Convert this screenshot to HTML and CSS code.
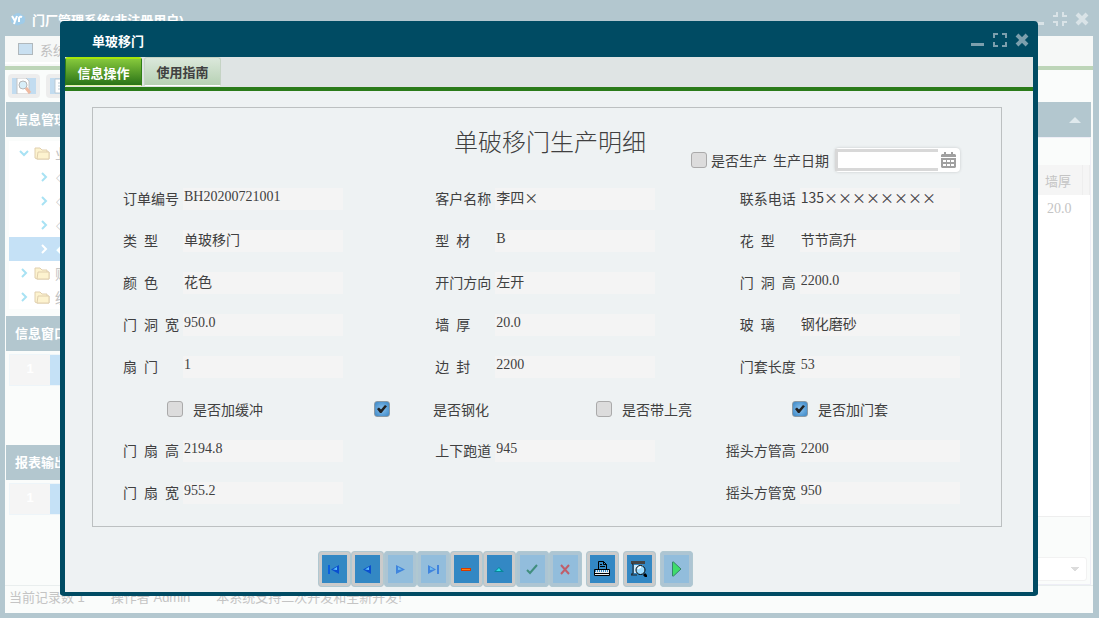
FILE: index.html
```html
<!DOCTYPE html>
<html lang="zh-CN">
<head>
    <meta charset="UTF-8">
    <meta name="viewport" content="width=device-width, initial-scale=1.0">
    <title>门厂管理系统</title>
    <link rel="stylesheet" href="styles.css">
</head>
<body>

    <div class="app">
        <header class="app-title">
            <svg class="logo" width="16" height="16" viewBox="0 0 16 16"><path d="M1 8a4 4 0 0 1 3-4 5 5 0 0 1 8 0 4 4 0 0 1 3 5 4 4 0 0 1-4 4 5 5 0 0 1-7 0A4 4 0 0 1 1 8z" fill="#9fcbe8"/><path d="M2 5l3 5 2-5M5 10l-1 3M9 11V7q1-2 3-1" stroke="#fff" stroke-width="2" fill="none"/></svg>
            <span>门厂管理系统(非注册用户)</span>
            <div class="win-btns">
                <button title="最小化"><svg width="16" height="16"><path d="M1 11h13v3H1z" fill="currentColor"/></svg></button>
                <button title="还原"><svg width="16" height="16"><path d="M1 5h4V1M11 1v4h4M1 11h4v4M11 15v-4h4" stroke="currentColor" stroke-width="2" fill="none"/></svg></button>
                <button title="关闭"><svg width="16" height="16"><path d="M3 3l10 10M13 3L3 13" stroke="currentColor" stroke-width="4"/></svg></button>
            </div>
        </header>
        <div class="app-body">
            <nav class="menu">
                <a href="#"><svg width="15" height="12"><rect x=".5" y=".5" width="14" height="11" fill="#c9e0f1" stroke="#b0b8bc"/></svg>系统</a>
            </nav>
            <div class="tools">
                <button title="查询"><svg width="24" height="16"><path fill="#c2dcf0" d="M0 0h24v16H0z"/><path d="M5 0h9l3 3v13H5z" fill="#fff" stroke="#c5c5c5"/><circle cx="11" cy="7" r="4" fill="#d8eef8" stroke="#b5b5b5"/><path d="M14 10l4 5" stroke="#f0b9a0" stroke-width="3"/></svg></button>
                <button title="列表"><svg width="24" height="16"><path fill="#c2dcf0" d="M0 0h24v16H0z"/><path d="M5 1h13v14H5zM8 5h7M8 8h7M8 11h7" fill="#fff" stroke="#bccbd5"/></svg></button>
            </div>
            <div class="work">
                <aside class="side">
                    <h2>信息管理</h2>
                    <ul class="tree">
                        <li><svg class="arrow" width="10" height="10"><path d="M1 3l4 4 4-4"/></svg><svg class="folder" width="16" height="14"><path d="M1 12V2h5l2 2h5v2h2v7H3z"/><path d="M4 6h11v7H3z"/></svg>业</li>
                        <li class="sub"><svg class="arrow" width="10" height="10"><path d="M3 1l4 4-4 4"/></svg>◇</li>
                        <li class="sub"><svg class="arrow" width="10" height="10"><path d="M3 1l4 4-4 4"/></svg>◇</li>
                        <li class="sub"><svg class="arrow" width="10" height="10"><path d="M3 1l4 4-4 4"/></svg>◇</li>
                        <li class="sub selected"><svg class="arrow" width="10" height="10"><path d="M3 1l4 4-4 4"/></svg>◆</li>
                        <li><svg class="arrow" width="10" height="10"><path d="M3 1l4 4-4 4"/></svg><svg class="folder" width="16" height="14"><path d="M1 12V2h5l2 2h5v2h2v7H3z"/><path d="M4 6h11v7H3z"/></svg>财</li>
                        <li><svg class="arrow" width="10" height="10"><path d="M3 1l4 4-4 4"/></svg><svg class="folder" width="16" height="14"><path d="M1 12V2h5l2 2h5v2h2v7H3z"/><path d="M4 6h11v7H3z"/></svg>统</li>
                    </ul>
                    <h2>信息窗口</h2>
                    <div class="list"><div class="list-row"><b>1</b><span></span></div></div>
                    <h2>报表输出</h2>
                    <div class="list"><div class="list-row"><b>1</b><span></span></div></div>
                </aside>
                <section class="main">
                    <h2><svg width="12" height="6"><path d="M0 6l6-6 6 6z" fill="#dfe9ed"/></svg></h2>
                    <div class="main-body">
                        <div class="grid">
                            <table>
                                <thead><tr><th>墙厚</th><th class="end"></th></tr></thead>
                                <tbody><tr><td>20.0</td><td class="end"></td></tr></tbody>
                            </table>
                        </div>
                        <div class="pager"><select aria-label="每页记录"><option></option></select></div>
                    </div>
                </section>
            </div>
            <footer class="status"><span>当前记录数 1</span><span>操作者 Admin</span><span>本系统支持二次开发和全新开发!</span></footer>
        </div>
    </div>

    <div class="dialog" role="dialog" aria-labelledby="dlgTitle">
        <header class="dialog-title">
            <span id="dlgTitle">单玻移门</span>
            <div class="win-btns">
                <button title="最小化"><svg width="16" height="16"><path d="M1 11h13v3H1z" fill="currentColor"/></svg></button>
                <button title="最大化"><svg width="16" height="16"><path d="M2 6V2h4M10 2h4v4M2 10v4h4M10 14h4v-4" stroke="currentColor" stroke-width="2" fill="none"/></svg></button>
                <button title="关闭"><svg width="16" height="16"><path d="M3 3l10 10M13 3L3 13" stroke="currentColor" stroke-width="4"/></svg></button>
            </div>
        </header>
        <nav class="tabs">
            <button class="active">信息操作</button>
            <button>使用指南</button>
        </nav>
        <form class="sheet">
            <div class="sheet-head">
                <h1>单破移门生产明细</h1>
                <label class="produce"><input type="checkbox">是否生产</label>
                <div class="date">
                    <label for="date">生产日期</label>
                    <div class="date-box">
                        <input type="text" id="date">
                        <button type="button" title="选择日期"><svg width="15" height="16"><path d="M3 0h2v2h5V0h2v2h2l1 1v2H0V3l1-1h2z" fill="#a0a0a0"/><path d="M0 6h15v9l-1 1H1l-1-1z" fill="#a0a0a0"/><path d="M2 8h3v2H2zM6 8h3v2H6zM10 8h3v2h-3zM2 12h3v2H2zM6 12h3v2H6zM10 12h3v2h-3z" fill="#fff"/></svg></button>
                    </div>
                </div>
            </div>
            <div class="fields">
                <div class="field"><label for="f1">订单编号</label><input type="text" id="f1" value="BH20200721001"></div>
                <div class="field"><label for="f2">客户名称</label><input type="text" id="f2" class="cjk" value="李四×"></div>
                <div class="field"><label for="f3" class="indent">联系电话</label><input type="text" id="f3" class="cjk" value="135××××××××"></div>

                <div class="field"><label for="f4">类&ensp;型</label><input type="text" id="f4" value="单玻移门"></div>
                <div class="field"><label for="f5">型&ensp;材</label><input type="text" id="f5" value="B"></div>
                <div class="field"><label for="f6" class="indent">花&ensp;型</label><input type="text" id="f6" value="节节高升"></div>

                <div class="field"><label for="f7">颜&ensp;色</label><input type="text" id="f7" value="花色"></div>
                <div class="field"><label for="f8">开门方向</label><input type="text" id="f8" value="左开"></div>
                <div class="field"><label for="f9" class="indent">门&ensp;洞&ensp;高</label><input type="text" id="f9" value="2200.0"></div>

                <div class="field"><label for="f10">门&ensp;洞&ensp;宽</label><input type="text" id="f10" value="950.0"></div>
                <div class="field"><label for="f11">墙&ensp;厚</label><input type="text" id="f11" value="20.0"></div>
                <div class="field"><label for="f12" class="indent">玻&ensp;璃</label><input type="text" id="f12" value="钢化磨砂"></div>

                <div class="field"><label for="f13">扇&ensp;门</label><input type="text" id="f13" value="1"></div>
                <div class="field"><label for="f14">边&ensp;封</label><input type="text" id="f14" value="2200"></div>
                <div class="field"><label for="f15" class="indent">门套长度</label><input type="text" id="f15" value="53"></div>

                <div class="checks">
                    <label><input type="checkbox">是否加缓冲</label>
                    <label class="far"><input type="checkbox" checked>是否钢化</label>
                    <label><input type="checkbox">是否带上亮</label>
                    <label><input type="checkbox" checked>是否加门套</label>
                </div>

                <div class="field"><label for="f16">门&ensp;扇&ensp;高</label><input type="text" id="f16" value="2194.8"></div>
                <div class="field"><label for="f17">上下跑道</label><input type="text" id="f17" value="945"></div>
                <div class="field"><label for="f18" class="long">摇头方管高</label><input type="text" id="f18" value="2200"></div>

                <div class="field"><label for="f19">门&ensp;扇&ensp;宽</label><input type="text" id="f19" value="955.2"></div>
                <div></div>
                <div class="field"><label for="f20" class="long">摇头方管宽</label><input type="text" id="f20" value="950"></div>
            </div>
        </form>
        <div class="nav-btns">
            <div class="group">
                <button title="第一条"><svg width="16" height="16"><path d="M3 4v9" stroke="#0a5fe0" stroke-width="2"/><path d="M13 4v9L5 8.500z" fill="#0a50d0"/><path d="M11 6v3L7 8.500z" fill="#5cc0ff"/></svg></button>
                <button title="上一条"><svg width="16" height="16"><path d="M12 4v9L4 8.500z" fill="#0a50d0"/><path d="M10 6v3L6 8.500z" fill="#5cc0ff"/></svg></button>
                <button title="下一条" disabled><svg width="16" height="16"><path d="M4 4v9l9-4.500z" fill="#0a60e0"/><path d="M6 6v3l4-.500z" fill="#5cc0ff"/></svg></button>
                <button title="最后一条" disabled><svg width="16" height="16"><path d="M13 4v9" stroke="#0a5fe0" stroke-width="2"/><path d="M3 4v9l8-4.500z" fill="#0a60e0"/><path d="M5 6v3l4-.500z" fill="#5cc0ff"/></svg></button>
                <button title="删除"><svg width="16" height="16"><path d="M3 7h10v3H3z" fill="#d43c00"/><path d="M4 8h8v1H4z" fill="#ff8010"/></svg></button>
                <button title="编辑"><svg width="16" height="16"><path d="M3 11l5-5 5 5z" fill="#078899"/><path d="M5 10l3-3 2 3z" fill="#2fe0e8"/></svg></button>
                <button title="保存" disabled><svg width="16" height="16"><path d="M3 9l3 3 7-8" stroke="#0a7040" stroke-width="2" fill="none"/></svg></button>
                <button title="取消" disabled><svg width="16" height="16"><path d="M4 4l8 9M12 4l-8 9" stroke="#e02020" stroke-width="2"/></svg></button>
            </div>
            <button title="打印"><svg width="16" height="16"><path d="M4.500 8V.5h5l3 3V8" fill="#3388c4" stroke="#000"/><path d="M9.500.5v3h3M6 3.500h2M6 5.500h5" stroke="#000" fill="none"/><path d="M.5 8.500h15v6H.5z" fill="#e8eef2" stroke="#000"/><path d="M1 10h14" stroke="#3388c4" stroke-dasharray="1 1" stroke-width="2"/><path d="M0 12.500h16" stroke="#000"/></svg></button>
            <button title="预览"><svg width="16" height="16"><path d="M0 0h14v3H0z" fill="#444"/><path d="M1 3h1v10H0v1h6" stroke="#222" fill="none"/><path d="M3 4h9v8H3z" fill="#cde8f8"/><circle cx="9.500" cy="9" r="4.500" fill="#9cdcff" stroke="#000"/><path d="M7 8q1-2 3-2" stroke="#fff" stroke-width="2" fill="none"/><path d="M13 13l3 3" stroke="#000" stroke-width="3"/></svg></button>
            <button title="运行" class="run"><svg width="16" height="16"><path d="M4.500 1v14h1L13 8 5.500 1z" fill="#3fdc6b" stroke="#35856a"/></svg></button>
        </div>
    </div>

</body>
</html>
```
FILE: styles.css
```css
* {
    box-sizing: border-box;
}
body {
    margin: 0;
    font-family: "Liberation Sans", "Noto Sans CJK SC", sans-serif;
    font-size: 13px;
    color: #c4c4c4;
}
button {
    font: inherit;
    color: inherit;
    padding: 0;
    border: none;
    background: none;
}
svg {
    display: block;
    flex: none;
}

/* main window */
.app {
    display: flex;
    flex-direction: column;
    height: 100vh;
    padding: 0 6px 5px 5px;
    background: #b3c7cf;
}
.app-title {
    display: flex;
    align-items: center;
    gap: 6px;
    height: 36px;
    padding: 2px 3px 0 5px;
    color: #fff;
    font-weight: bold;
}
.win-btns {
    display: flex;
    gap: 6px;
    margin-left: auto;
}
.app .win-btns {
    color: #d9e3e7;
}
.app-body {
    flex: 1;
    display: flex;
    flex-direction: column;
    min-height: 0;
    background: #fafcfb;
}
.menu {
    height: 34px;
    padding-right: 2px;
    border-bottom: 4px solid #bdd5b8;
    background: #f6f8f7;
}
.menu a {
    display: flex;
    align-items: center;
    gap: 7px;
    width: 90px;
    height: 28px;
    padding-left: 13px;
    border-bottom: 2px solid #fff;
    color: #c0c0c0;
    text-decoration: none;
}
.tools {
    display: flex;
    gap: 6px;
    height: 32px;
    padding: 4px 3px;
}
.tools button {
    display: grid;
    place-items: center;
    width: 32px;
    height: 24px;
    border-radius: 4px;
    background: #ededed;
}
.work {
    flex: 1;
    display: flex;
    min-height: 0;
}
.work h2 {
    margin: 0;
    padding-left: 9px;
    background: #b3c7cf;
    color: #fff;
    font-size: 13px;
    line-height: 35px;
}
.side {
    width: 220px;
    padding-left: 1px;
}
.tree {
    height: 179px;
    margin: 0;
    padding: 4px 0 0 3px;
    list-style: none;
}
.tree li {
    display: flex;
    align-items: center;
    gap: 5px;
    height: 24px;
    padding-left: 10px;
    background: #fff;
    font-size: 14px;
}
.tree .sub {
    gap: 7px;
    padding-left: 30px;
}
.tree .selected {
    background: #c5e1f6;
    color: #fff;
}
.arrow {
    fill: none;
    stroke: #a8e2f4;
    stroke-width: 2;
}
.selected .arrow {
    stroke: #fff;
}
.folder {
    fill: #fdf3cf;
    stroke: #e0cfae;
}
.list {
    height: 94px;
    padding: 3px 0 4px 3px;
}
.list-row {
    display: flex;
    height: 32px;
    border: 1px solid #eef5f9;
    background: #c5e1f6;
    color: #fff;
}
.list-row b {
    width: 40px;
    background: #f5f5f5;
    line-height: 28px;
    text-align: center;
}
.main {
    flex: 1;
    display: flex;
    flex-direction: column;
    margin: 0 2px 0 5px;
}
.main h2 {
    display: flex;
    align-items: center;
    justify-content: flex-end;
    height: 35px;
    padding-right: 10px;
}
.main-body {
    flex: 1;
    display: flex;
    flex-direction: column;
    padding-top: 27px;
    border: 1px solid #eeeef6;
}
.grid {
    flex: 1;
    background: #fff;
}
.main table {
    width: 100%;
    border-collapse: collapse;
    text-align: right;
}
.main th {
    height: 30px;
    padding: 0 11px;
    border-right: 1px solid #eee;
    background: #f5f5f5;
    font-weight: normal;
}
.main td {
    height: 28px;
    padding: 0 11px;
    font: 14px "Liberation Serif", serif;
}
.main .end {
    width: 7px;
    padding: 0;
}
.pager {
    padding: 40px 3px 3px;
    border-top: 1px solid #eee;
}
.pager select {
    appearance: none;
    display: block;
    width: 120px;
    height: 24px;
    margin-left: auto;
    border: 1px solid #f2f2f2;
    border-radius: 3px;
    background: #fff conic-gradient(from -45deg at 50% 100%, #dcdcdc 90deg, transparent 0) no-repeat right 6px center / 10px 5px;
}
.status {
    display: flex;
    gap: 26px;
    height: 28px;
    padding-left: 4px;
    border-top: 1px solid #e9eeee;
    line-height: 24px;
}

/* dialog */
.dialog {
    position: absolute;
    inset: 21px 61px 22px 60px;
    display: flex;
    flex-direction: column;
    border: solid #004b63;
    border-width: 0 5px 4px;
    border-radius: 4px;
    background: #eef2f3;
    color: #404040;
}
.dialog-title {
    display: flex;
    align-items: center;
    height: 36px;
    padding: 2px 3px 0 27px;
    background: #004b63;
    color: #fff;
    font-weight: bold;
}
.dialog-title .win-btns {
    color: #7c9fad;
}
.tabs {
    display: flex;
    gap: 2px;
    height: 34px;
    border-bottom: 4px solid #2b7b1a;
    background: #dfe4e4;
}
.tabs button {
    width: 77px;
    height: 29px;
    border: 1px solid #c5d3c4;
    border-bottom-color: #fff;
    border-radius: 3px 3px 0 0;
    background: linear-gradient(#dbe8db, #b7d1b4);
    color: #404040;
    font-weight: bold;
}
.tabs .active {
    border-color: #2f7d17;
    border-top: 2px solid #a5e60a;
    border-bottom-color: #e5f5a5;
    background: linear-gradient(#86c83b, #2a7318);
    color: #fff;
}

.sheet {
    margin: 16px 31px 0 27px;
    padding: 0 41px 22px 30px;
    border: 1px solid #bcc0c1;
    font-size: 14px;
}
.sheet-head {
    display: grid;
    grid-template-columns: 331fr 237fr 82fr 187fr;
    height: 80px;
    padding-top: 18px;
}
.sheet-head h1 {
    grid-column: 2;
    margin: 0;
    font-size: 24px;
    font-weight: 300;
    line-height: 34px;
    white-space: nowrap;
}
.produce, .date {
    display: flex;
    align-items: center;
    height: 26px;
    margin-top: 21px;
    white-space: nowrap;
}
.produce {
    gap: 4px;
}
.date {
    justify-content: flex-end;
    gap: 6px;
}
.date-box {
    display: flex;
    align-items: center;
    width: 125px;
    height: 24px;
    border-radius: 4px;
    background: #fff;
    box-shadow: 0 0 3px #c4c8c9;
}
.date-box input {
    width: 103px;
    height: 22px;
    border: 3px solid #d8d8d8;
    border-right: none;
    background: #fff;
}
.date-box button {
    margin-left: 3px;
}
input[type="checkbox"] {
    appearance: none;
    flex: none;
    width: 16px;
    height: 16px;
    margin: 0;
    border: 1px solid #aaa;
    border-radius: 3px;
    background: #dcdcdc;
}
input[type="checkbox"]:checked {
    border-color: #8a9aa6;
    background: radial-gradient(#8cc4f0, #3a86c4);
}
input[type="checkbox"]:checked::before {
    content: "";
    display: block;
    width: 10px;
    height: 8px;
    margin: 3px 0 0 2px;
    background: #222;
    clip-path: polygon(0 50%, 20% 30%, 40% 55%, 80% 0, 100% 15%, 45% 100%, 30% 100%);
}
.fields {
    display: grid;
    grid-template-columns: 312fr 290fr 234fr;
    row-gap: 20px;
}
.field {
    display: flex;
    height: 22px;
}
.field label {
    width: 60px;
    line-height: 22px;
    white-space: nowrap;
}
.field .indent {
    width: 74px;
    padding-left: 14px;
}
.field .long {
    width: 74px;
}
.field input {
    width: 160px;
    height: 22px;
    padding: 0 0 4px 1px;
    border: none;
    background: #f4f4f4;
    color: #404040;
    font: 14px/18px "Liberation Serif", "Noto Sans CJK SC", serif;
}
.field .cjk {
    font-family: "Noto Sans CJK SC", sans-serif;
}
.checks {
    grid-column: 1 / -1;
    display: grid;
    grid-template-columns: 207fr 222fr 196fr 168fr;
    padding-left: 44px;
}
.checks label {
    display: flex;
    align-items: center;
    gap: 10px;
    height: 22px;
}
.checks .far {
    gap: 43px;
}

.nav-btns {
    display: flex;
    justify-content: center;
    gap: 4px;
    margin-top: 24px;
    padding-right: 88px;
}
.group {
    display: flex;
}
.nav-btns button {
    display: grid;
    place-items: center;
    width: 33px;
    height: 36px;
    border: 4px solid #cbcbcb;
    border-radius: 4px;
    outline: 1px solid #b0c8d1;
    outline-offset: -1px;
    background: #3388c4;
}
.nav-btns button:disabled, .nav-btns .run {
    border-color: #adc5d3;
    background: #92bddc;
}
.nav-btns button:disabled svg {
    opacity: 0.6;
}
```
